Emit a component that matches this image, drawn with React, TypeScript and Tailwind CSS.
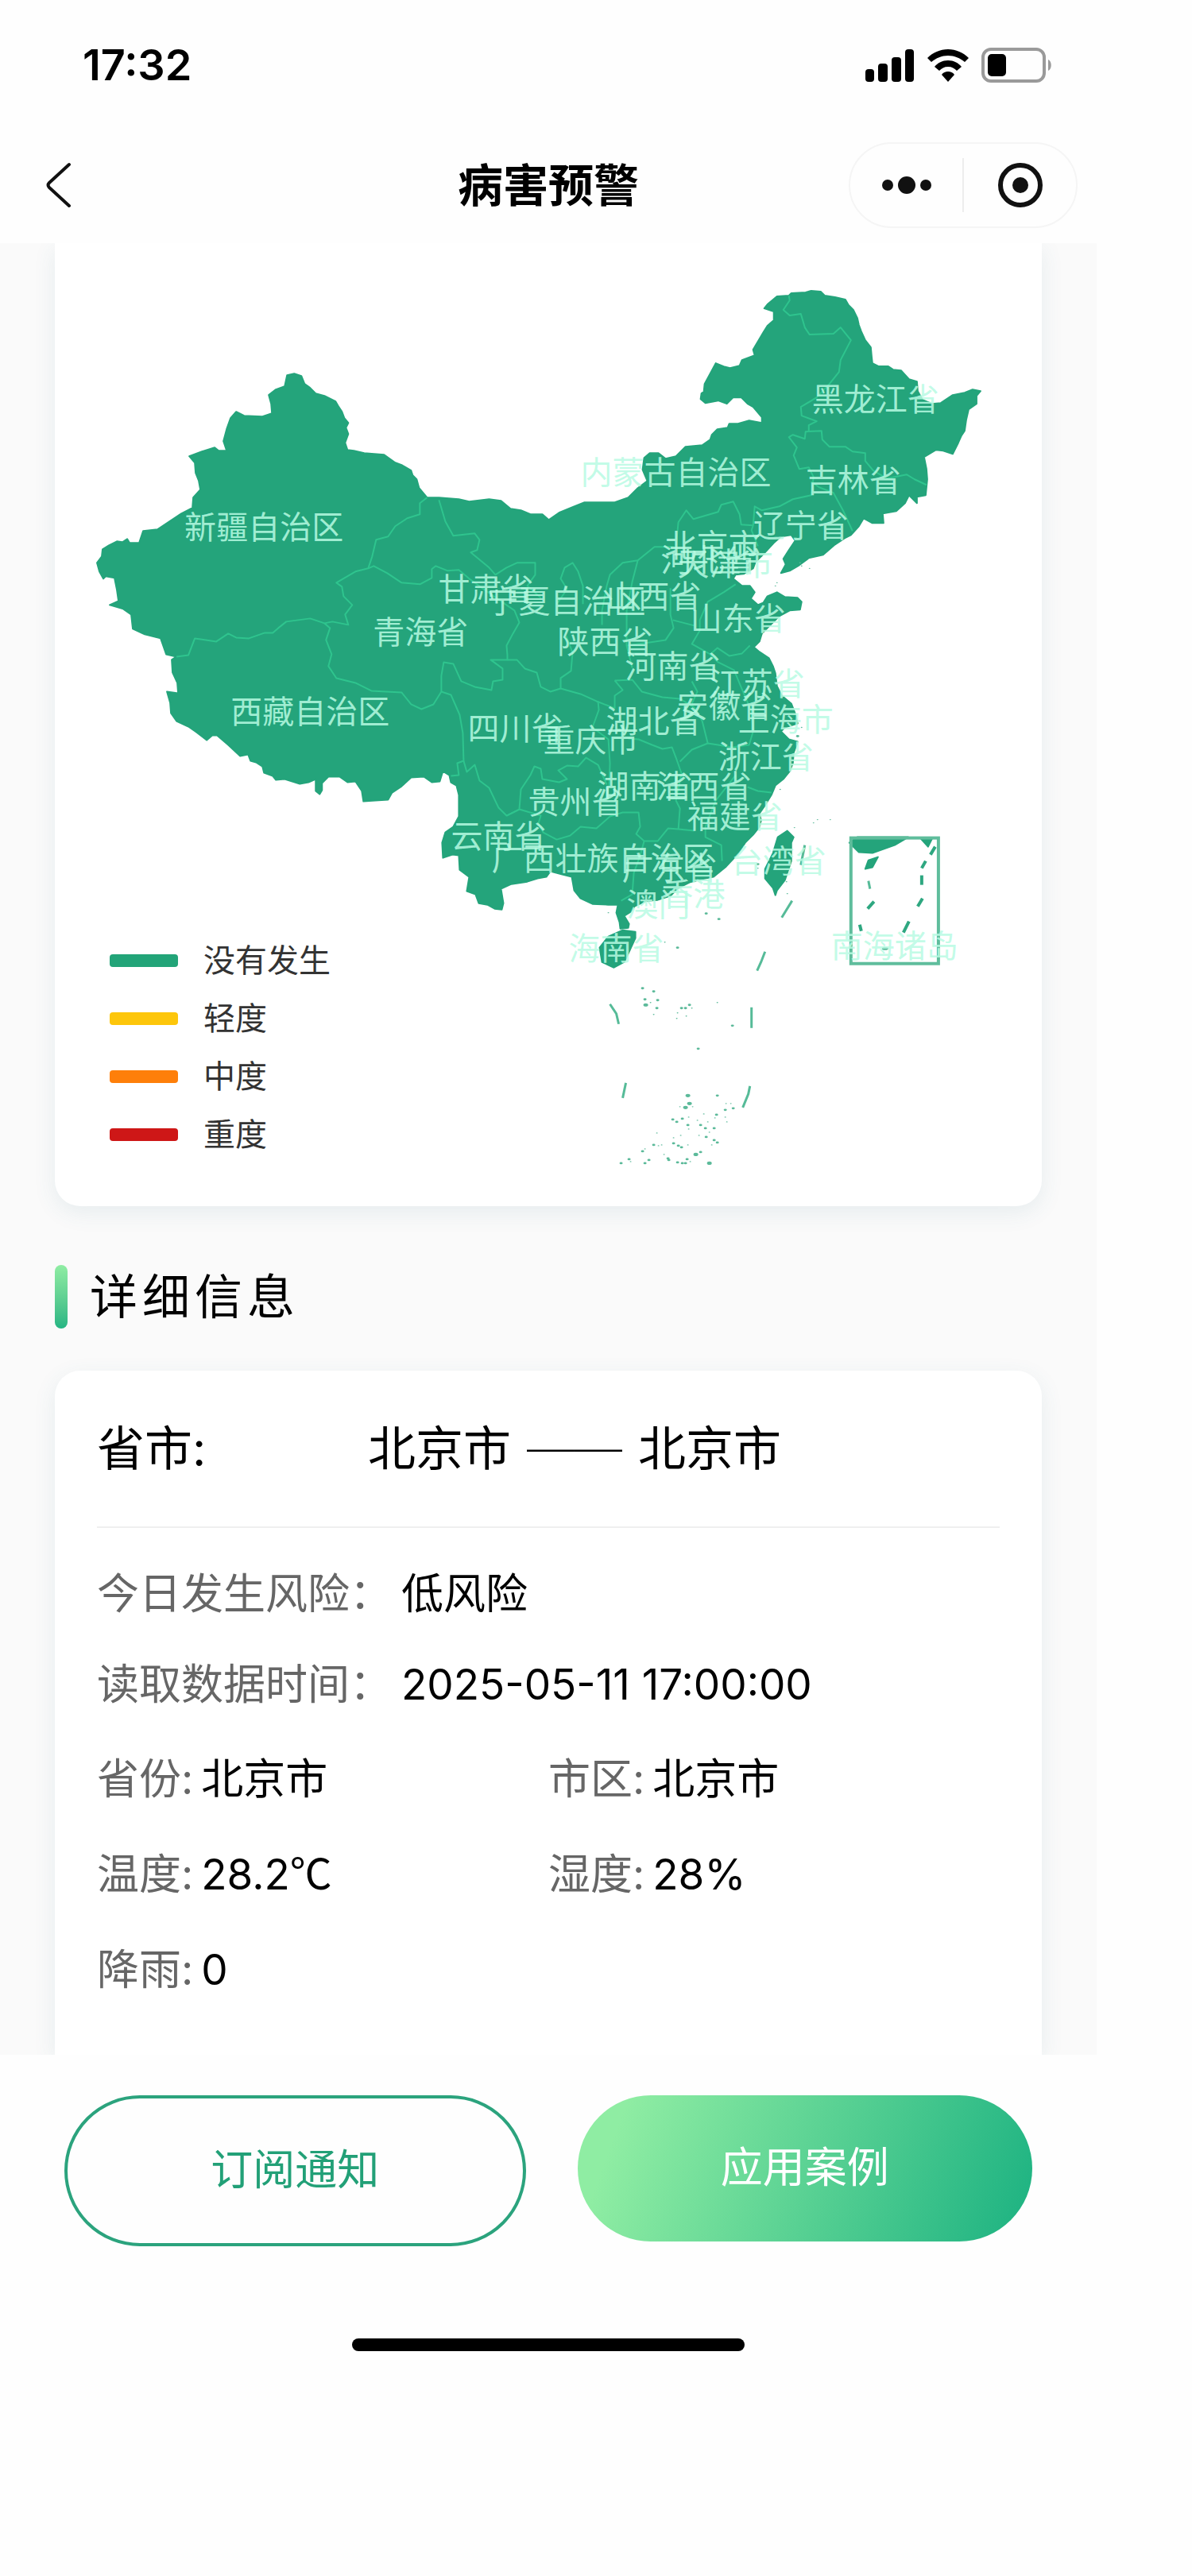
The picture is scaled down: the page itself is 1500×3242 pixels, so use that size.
import React from "react";

const MAINLAND =
  "361,472 370,470 379,473 383,483 390,488 397,495 408,498 422,505 426,512 430,518 433,526 438,532 435,538 438,546 434,557 437,566 445,567 458,570 483,572 497,582 505,585 517,592 519,598 524,603 527,614 532,620 537,626 552,626 577,628 590,631 615,628 630,630 642,640 655,642 667,647 682,647 690,654 703,645 720,638 735,632 773,632 790,626 802,614 814,605 808,591 810,576 817,570 828,570 837,577 850,574 862,562 883,560 893,553 895,547 902,540 915,538 917,533 928,533 942,529 958,532 958,525 947,512 940,508 932,500 922,500 914,508 903,504 887,507 881,502 882,495 885,493 886,483 900,457 910,461 918,463 930,460 933,453 949,447 947,440 960,418 965,410 973,403 973,392 961,388 965,383 977,373 992,372 995,369 1013,368 1020,366 1032,367 1037,372 1050,374 1063,377 1067,384 1073,390 1078,400 1080,409 1083,417 1088,428 1095,437 1096,448 1097,457 1105,461 1117,461 1123,465 1133,466 1143,477 1153,480 1154,492 1160,503 1172,508 1183,507 1198,497 1213,494 1223,490 1233,492 1228,498 1228,508 1218,515 1215,528 1213,542 1209,548 1205,557 1198,571 1186,567 1177,566 1162,575 1165,590 1166,603 1164,623 1153,625 1153,633 1143,623 1138,633 1127,643 1110,646 1111,658 1097,658 1086,652 1080,662 1070,673 1062,677 1050,685 1035,698 1017,702 1005,711 993,718 982,721 988,710 985,703 992,692 1000,680 995,673 982,675 973,683 960,697 950,707 947,715 935,722 925,723 922,728 933,737 943,737 949,745 944,753 953,761 960,758 965,750 977,745 987,751 1003,752 1008,757 1006,767 993,768 980,775 968,787 958,797 955,807 948,814 955,820 967,828 972,838 975,847 977,863 983,875 995,885 1000,898 1003,910 987,915 982,920 992,930 1003,933 998,947 997,960 993,970 985,980 975,988 970,1000 962,1013 955,1023 957,1032 955,1040 947,1050 937,1060 927,1075 913,1090 897,1103 882,1106 867,1110 853,1117 843,1127 827,1132 813,1133 798,1140 793,1147 785,1152 791,1162 790,1167 780,1168 779,1160 775,1148 777,1138 765,1138 745,1137 730,1130 722,1120 719,1103 707,1100 692,1096 687,1103 676,1105 663,1109 643,1112 630,1118 633,1136 631,1144 622,1143 613,1138 602,1136 598,1125 587,1121 590,1103 578,1094 577,1076 569,1075 557,1079 556,1060 560,1047 570,1040 577,1027 577,1000 574,988 567,984 565,975 557,970 553,983 543,984 533,977 517,978 505,989 493,997 488,1006 472,1007 457,1008 455,995 447,983 437,984 427,977 413,977 405,985 405,994 402,999 397,995 397,980 388,984 377,986 358,980 347,981 343,976 332,972 330,964 322,959 315,957 312,949 302,951 287,937 273,925 267,925 260,931 247,921 237,914 222,907 215,897 214,884 210,870 224,872 223,859 217,846 216,830 222,826 209,823 202,803 182,798 167,791 165,773 155,766 138,761 149,756 147,742 144,727 133,725 130,728 125,719 122,708 128,700 129,691 137,686 147,681 154,682 160,678 163,683 175,683 180,668 198,666 213,656 228,646 242,639 243,626 252,616 250,605 246,595 245,582 238,574 254,568 270,563 275,567 285,567 281,555 285,540 290,526 297,518 307,523 330,524 342,520 341,508 338,497 347,490 358,486";

const ISLANDS = [
  "990,1045 998,1053 995,1060 995,1083 987,1107 977,1120 975,1126 972,1117 962,1105 962,1093 972,1073 978,1053",
  "783,1170 799,1172 799,1180 792,1195 785,1210 772,1217 757,1210 754,1192 765,1178",
  "1068,1060 1078,1053 1142,1053 1125,1063 1097,1073 1080,1072",
  "1158,1055 1172,1055 1167,1065",
  "1088,1093 1092,1082 1104,1078 1097,1091",
];

const BORDERS = [
  "537,626 528,633 528,647 512,652 497,662 488,675 473,679 468,700 463,715 447,719 423,733 430,738 432,750 443,761 434,773 438,786 418,782 408,784 390,778 360,782 350,790 343,796 333,796 313,803 297,802 287,797 272,807 245,803 237,824 222,826",
  "463,715 470,712 487,721 505,733 528,735 543,727 543,716 548,712 563,718 577,717 590,728 618,748 647,768 653,783 645,797 637,812 638,824 638,830 617,830 632,841 632,855 620,857 618,868 597,864 580,857 570,835 558,833 555,850 555,870",
  "408,784 415,790 410,805 417,823 413,838 423,853 447,859 467,869 505,871 517,886 530,892 545,886 555,870 567,874 578,899 582,922 583,957 575,960 577,975 567,976",
  "583,957 587,971 597,962 603,982 615,991 627,1016 637,1026 653,1018 655,993 667,975 672,964 680,967 682,980 703,984 713,980 702,969 713,963 727,964 737,953 752,962 763,987",
  "637,1026 653,1018 680,1026 677,1036 683,1047 700,1056 717,1051 730,1040 750,1042 767,1027 783,1022 803,1022 805,1040 800,1049 810,1058 827,1058 840,1042 853,1043 873,1045",
  "810,1058 805,1076 797,1098 795,1125 781,1133",
  "853,1043 855,1017 850,1007 857,973 850,953 845,940 833,942 820,937 803,930 790,929",
  "855,958 870,943 890,935 903,937 920,940 942,937 947,920",
  "773,856 783,868 773,875 773,891",
  "773,856 795,855 807,870 833,877 855,879 873,890 883,907 890,935",
  "638,830 650,830 660,841 675,846 680,864 692,870 705,866 730,873 750,882 773,891",
  "705,866 705,853 718,844 720,821 712,800",
  "752,882 753,893 745,915 765,930 767,960 766,990",
  "552,629 560,656 570,674 597,671 603,679 600,692 592,695 615,714 623,723 637,714 650,708 673,708 673,723 663,737 680,752",
  "733,760 733,737 727,719 720,708 710,714 705,728 713,741 700,760",
  "757,786 757,768 763,737 767,723 783,708 802,705 823,688 847,688",
  "802,705 795,732 788,768 788,812 795,840",
  "850,687 853,657 863,642 872,653 903,644 907,635 922,631 930,647 932,660 947,661 945,667 953,687",
  "947,661 949,637 958,642 980,637 997,628 1020,623 1023,600 1017,588 1005,590 998,573 1002,563 992,550 997,547 1012,552 1013,543 1033,542 1034,553 1043,562 1063,562 1072,568 1088,570 1088,580 1098,592 1115,602 1140,597 1150,603 1165,610",
  "992,372 993,378 985,390 993,397 1007,395 1012,412 1018,421 1048,420 1057,412 1070,428 1057,453 1055,468 1043,483 1027,500 1007,512 1008,523 1027,530 1017,535 1017,542",
  "1020,606 1030,613 1048,620 1060,642 1072,668",
  "925,735 910,745 890,757 880,780 880,793 870,810 893,823 902,815 917,825 933,822 943,812",
  "843,740 843,773 847,790 837,805 817,808 788,812",
  "846,780 873,787",
  "893,823 903,833 923,843 933,867 945,895 947,920",
  "870,857 877,870 870,885",
  "940,990 953,995 970,997",
  "925,975 900,1007 887,1040 887,1053 907,1063 908,1083",
];

const SEA_DASHES = [
  "1012,1063 1007,1088",
  "996,1133 983,1154",
  "962,1197 957,1210 952,1221",
  "767,1263 775,1275 778,1288",
  "945,1267 945,1293",
  "787,1362 783,1381",
  "943,1366 941,1376 934,1393",
  "1092,1108 1094,1118",
];

const INSET_DASHES = [
  "1091,1143 1099,1134",
  "1081,1163 1083,1171",
  "1170,1075 1176,1065",
  "1159,1092 1164,1083",
  "1159,1101 1159,1113",
  "1154,1140 1160,1130",
  "1136,1173 1143,1159",
];

const REEFS: [number, number, number][] = [
  [888, 1149, 2], [904, 1156, 2], [765, 1148, 1], [852, 1192, 2], [836, 1185, 1],
  [808, 1243, 2], [822, 1247, 2], [811, 1257, 2], [812, 1264, 3], [818, 1261, 1], [827, 1258, 2],
  [826, 1268, 2], [822, 1276, 1], [857, 1268, 2], [862, 1268, 2], [867, 1264, 2], [870, 1268, 1],
  [852, 1274, 1], [863, 1278, 1], [851, 1281, 1], [902, 1261, 1], [921, 1290, 2], [878, 1319, 2],
  [865, 1378, 3], [902, 1378, 2], [867, 1388, 3], [862, 1393, 3], [855, 1392, 1], [871, 1392, 1],
  [913, 1388, 1], [919, 1388, 1], [912, 1396, 2], [922, 1394, 2], [885, 1401, 1], [901, 1402, 2],
  [899, 1406, 1], [912, 1405, 1], [914, 1411, 1], [846, 1408, 2], [851, 1411, 2], [858, 1407, 2],
  [866, 1405, 1], [877, 1409, 1], [865, 1415, 2], [866, 1420, 1], [881, 1415, 2], [887, 1419, 2],
  [890, 1411, 1], [898, 1419, 2], [892, 1424, 1], [826, 1425, 1], [856, 1428, 1], [847, 1431, 1],
  [879, 1428, 1], [888, 1430, 2], [898, 1434, 2], [902, 1437, 2], [895, 1440, 1], [847, 1438, 2],
  [853, 1441, 2], [857, 1443, 2], [865, 1440, 1], [822, 1440, 2], [828, 1441, 1], [832, 1440, 1],
  [808, 1448, 2], [811, 1445, 1], [835, 1452, 1], [840, 1457, 2], [841, 1459, 2], [875, 1452, 3],
  [881, 1449, 2], [781, 1463, 2], [791, 1458, 2], [793, 1461, 1], [811, 1463, 2], [816, 1459, 2],
  [852, 1462, 2], [858, 1463, 2], [862, 1463, 2], [864, 1458, 2], [868, 1461, 1], [892, 1463, 3],
  [999, 1041, 1], [1023, 1035, 1], [1028, 1031, 1], [1044, 1031, 1], [1008, 915, 1],
  [1003, 926, 2], [1002, 937, 1], [981, 993, 1], [953, 1087, 2], [953, 1092, 1], [990, 1124, 1],
  [989, 1109, 1], [1008, 712, 1], [1018, 715, 1], [1006, 708, 1], [975, 737, 1], [977, 733, 1],
];

const PROVINCES: [string, number, number][] = [
  ["新疆自治区", 232, 664], ["西藏自治区", 290, 896], ["青海省", 469, 796], ["甘肃省", 551, 742],
  ["宁夏自治区", 612, 757], ["陕西省", 701, 808], ["山西省", 762, 751], ["河南省", 786, 839],
  ["四川省", 588, 917], ["重庆市", 683, 931], ["湖北省", 762, 908], ["安徽省", 851, 889],
  ["江苏省", 892, 861], ["上海市", 928, 906], ["浙江省", 903, 952], ["湖南省", 751, 989],
  ["江西省", 825, 989], ["贵州省", 664, 1009], ["福建省", 864, 1027], ["云南省", 567, 1052],
  ["广西壮族自治区", 618, 1080], ["广东省", 782, 1092], ["台湾省", 919, 1083], ["香港", 832, 1125],
  ["澳门", 788, 1138], ["海南省", 715, 1193], ["南海诸岛", 1045, 1190], ["内蒙古自治区", 730, 595],
  ["黑龙江省", 1021, 503], ["吉林省", 1013, 605], ["辽宁省", 947, 662], ["北京市", 836, 687],
  ["河北省", 831, 705], ["天津市", 852, 710], ["山东省", 868, 779],
];

function ChinaMap() {
  return (
    <svg viewBox="69 306 1241 1211" className="block w-full" role="img" aria-label="全国病害分布图">
      <g fill="#24a47b" stroke="#24a47b" strokeWidth="2" strokeLinejoin="round">
        <polygon points={MAINLAND} />
        {ISLANDS.map((p) => (
          <polygon key={p} points={p} />
        ))}
      </g>
      <g fill="none" stroke="#2fc48e" strokeWidth="2" strokeLinejoin="round">
        {BORDERS.map((p) => (
          <polyline key={p} points={p} />
        ))}
      </g>
      <rect x="1070" y="1054" width="110" height="158" fill="none" stroke="#5fbd9c" strokeWidth="4" />
      <g fill="none" stroke="#56bb98" strokeWidth="3">
        {SEA_DASHES.map((p) => (
          <polyline key={p} points={p} />
        ))}
      </g>
      <g fill="none" stroke="#2ea780" strokeWidth="4">
        {INSET_DASHES.map((p) => (
          <polyline key={p} points={p} />
        ))}
      </g>
      <g fill="#5cba9a">
        {REEFS.map(([x, y, r], i) => (
          <ellipse key={i} cx={x} cy={y} rx={r} ry={r * 0.7} />
        ))}
        <ellipse cx="1113" cy="1193" rx="4" ry="2" />
      </g>
      <g fill="#b8fbe3" fillOpacity="0.85" fontSize="40">
        {PROVINCES.map(([name, x, y]) => (
          <text key={name} x={x} y={y} dy="14">
            {name}
          </text>
        ))}
      </g>
    </svg>
  );
}

const LEGEND = [
  { label: "没有发生", color: "bg-[#22a478]" },
  { label: "轻度", color: "bg-[#fdc60b]" },
  { label: "中度", color: "bg-[#fe7f0a]" },
  { label: "重度", color: "bg-[#ce1717]" },
];

const READINGS = [
  { label: "省份", value: "北京市" },
  { label: "市区", value: "北京市" },
  { label: "温度", value: "28.2", unit: "℃" },
  { label: "湿度", value: "28%" },
  { label: "降雨", value: "0" },
];

function StatusBar() {
  return (
    <div className="flex h-[160px] items-center justify-between pt-[4px] pl-[104px] pr-[56px]">
      <span className="text-[54px] leading-none font-semibold text-black">17:32</span>
      <svg viewBox="0 0 236 44" className="h-[44px] w-[236px]" aria-hidden="true">
        <rect x="1" y="27" width="11" height="16" rx="4" />
        <rect x="17" y="20" width="12" height="23" rx="4" />
        <rect x="34" y="12" width="12" height="31" rx="4" />
        <rect x="51" y="2" width="11" height="41" rx="4" />
        <path d="M105 2C95 2 86 6 79 13l5 5c6-5 13-8 21-8s15 3 21 8l5-5C124 6 115 2 105 2Z" />
        <path d="M105 16c-7 0-13 3-17 8l6 5c3-3 6-5 11-5s8 2 11 5l6-5c-4-5-10-8-17-8Z" />
        <path d="M105 30c-3 0-6 1-8 4l8 9 8-9c-2-3-5-4-8-4Z" />
        <rect x="149" y="2" width="77" height="40" rx="10" fill="none" stroke="#9a9a9a" strokeWidth="4" />
        <rect x="155" y="8" width="23" height="28" rx="5" />
        <path d="M231 15c5 2 5 12 0 14Z" fill="#9a9a9a" />
      </svg>
    </div>
  );
}

function NavBar() {
  return (
    <header className="grid h-[146px] grid-cols-[1fr_auto_1fr] items-center px-[24px]">
      <button type="button" aria-label="返回" className="ml-[32px] justify-self-start">
        <svg viewBox="0 0 36 60" className="h-[60px] w-[36px]" fill="none" stroke="#111" strokeWidth="4">
          <path d="M31 4 6 27q-3 3 0 6l25 23" strokeLinecap="round" strokeLinejoin="round" />
        </svg>
      </button>
      <h1 className="text-[57px] leading-none font-bold text-black">病害预警</h1>
      <div className="flex h-[108px] w-[288px] items-center justify-self-end rounded-full border-2 border-[#f5f5f5]">
        <button type="button" aria-label="更多" className="flex flex-1 justify-center">
          <svg viewBox="0 0 66 24" className="h-[24px] w-[66px]" fill="#111">
            <circle cx="9" cy="12" r="7" />
            <circle cx="33" cy="12" r="11" />
            <circle cx="57" cy="12" r="7" />
          </svg>
        </button>
        <span className="h-[68px] w-[2px] bg-[#ededed]" />
        <button type="button" aria-label="关闭" className="flex flex-1 justify-center">
          <svg viewBox="0 0 60 60" className="size-[60px]">
            <circle cx="30" cy="30" r="25" fill="none" stroke="#111" strokeWidth="6" />
            <circle cx="30" cy="30" r="10" fill="#111" />
          </svg>
        </button>
      </div>
    </header>
  );
}

export default function App() {
  return (
    <div lang="zh-CN" className="min-h-screen bg-[#fefefe] font-[Inter,'Noto_Sans_CJK_SC',sans-serif]">
      <div className="w-[92%]">
        <StatusBar />
        <NavBar />
        <main className="overflow-hidden bg-[#fafafa] px-[5%]">
          <section className="relative rounded-b-[32px] bg-white shadow-[0_8px_28px_rgba(60,120,140,0.1)]">
            <ChinaMap />
            <ul className="absolute bottom-[60px] left-[69px] flex flex-col gap-[13px]">
              {LEGEND.map((item) => (
                <li key={item.label} className="flex items-center gap-[32px] text-[40px] leading-[60px] text-[#333]">
                  <span className={`h-[16px] w-[86px] rounded-[4px] ${item.color}`} />
                  {item.label}
                </li>
              ))}
            </ul>
          </section>

          <div className="mt-[74px] flex h-[80px] items-center gap-[28px]">
            <span className="h-[80px] w-[16px] rounded-full bg-linear-to-b from-[#8feda3] to-[#22b583]" />
            <h2 className="text-[60px] leading-none tracking-widest text-black">详细信息</h2>
          </div>

          <section className="mt-[53px] h-[861px] rounded-t-[32px] bg-white px-[53px] shadow-[0_8px_28px_rgba(60,120,140,0.1)]">
            <div className="flex h-[198px] items-center border-b-2 border-[#efefef] text-[60px] leading-none text-black">
              <span className="w-[341px]">省市:</span>
              <span className="flex gap-[20px]">
                <span>北京市</span>
                <span className="font-[family-name:'Noto_Sans_CJK_SC',sans-serif]">──</span>
                <span>北京市</span>
              </span>
            </div>
            <dl className="mt-[26px] text-[53px] leading-[114px]">
              <div className="flex gap-[12px]">
                <dt className="text-[#666]">今日发生风险：</dt>
                <dd className="text-black">低风险</dd>
              </div>
              <div className="flex gap-[12px]">
                <dt className="text-[#666]">读取数据时间：</dt>
                <dd className="text-black">2025-05-11 17:00:00</dd>
              </div>
            </dl>
            <dl className="grid grid-cols-2 pt-[2px] text-[53px] leading-[120px]">
              {READINGS.map(({ label, value, unit }) => (
                <div key={label} className="flex gap-[10px]">
                  <dt className="text-[#666]">{label}:</dt>
                  <dd className="text-black">
                    {value}
                    {unit && (
                      <span className="font-[family-name:'Noto_Sans_CJK_SC',sans-serif] leading-none">{unit}</span>
                    )}
                  </dd>
                </div>
              ))}
            </dl>
          </section>
        </main>

        <footer className="pt-[51px]">
          <div className="flex items-start gap-[65px] pr-[81px] pl-[81px]">
            <button
              type="button"
              className="h-[190px] flex-1 rounded-full border-4 border-[#2ba37d] text-[53px] text-[#22a077]"
            >
              订阅通知
            </button>
            <button
              type="button"
              className="h-[184px] flex-1 rounded-full bg-linear-[110deg] from-[#8feda3] from-10% to-[#22b583] to-95% text-[53px] text-white"
            >
              应用案例
            </button>
          </div>
          <div className="mx-auto mt-[116px] h-[16px] w-[494px] rounded-full bg-black" />
        </footer>
      </div>
    </div>
  );
}
